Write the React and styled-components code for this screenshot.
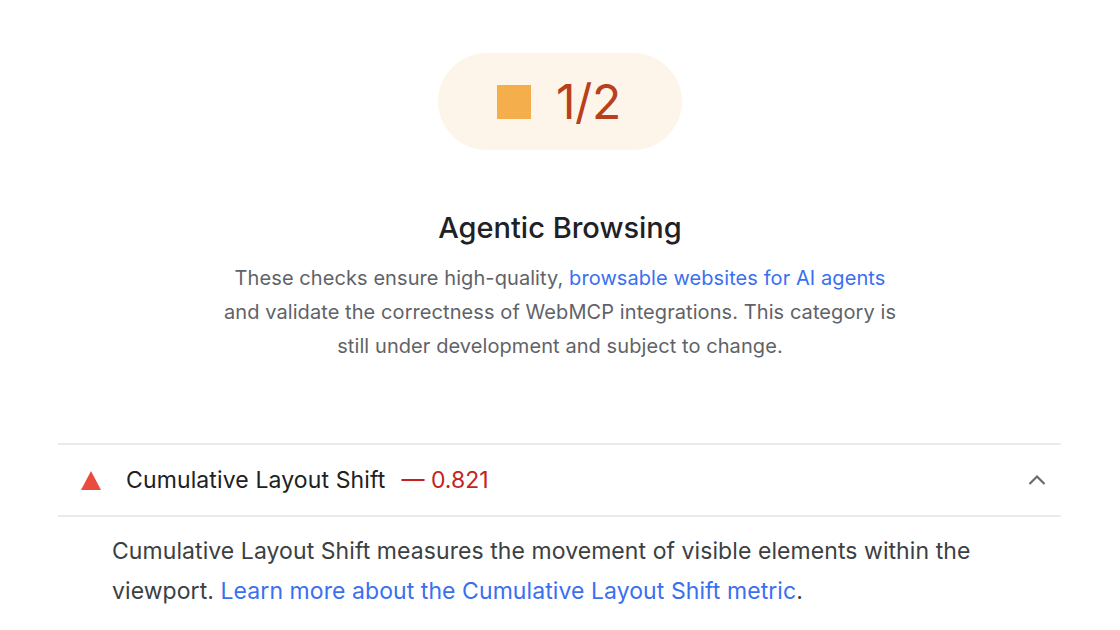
import React from "react";
import styled, { createGlobalStyle } from "styled-components";

const Global = createGlobalStyle`
  html, body { margin: 0; padding: 0; background: #fff; }
  body { font-family: Inter, "Noto Sans", Roboto, sans-serif; color: #202124; -webkit-font-smoothing: antialiased; }
`;

const Page = styled.div`
  width: 1120px;
  height: 630px;
  overflow: hidden;
  display: flex;
  flex-direction: column;
  align-items: center;
`;

const Header = styled.header`
  display: flex;
  flex-direction: column;
  align-items: center;
  padding-top: 53px;
`;

const ScorePill = styled.div`
  width: 244px;
  height: 97px;
  border-radius: 49px;
  background: #fdf5ea;
  display: flex;
  align-items: center;
  justify-content: center;
  gap: 25px;
  padding-right: 2px;
  box-sizing: border-box;
`;

const Square = styled.span`
  width: 34px;
  height: 34px;
  background: #f4af4c;
  display: block;
`;

const Score = styled.span`
  font-size: 48px;
  color: #b8401c;
  line-height: 1;
  font-weight: 400;
  letter-spacing: -0.3px;
`;

const Title = styled.h2`
  margin: 61px 0 0;
  font-size: 29px;
  font-weight: 500;
  color: #202124;
  line-height: 34px;
  letter-spacing: 0;
`;

const Description = styled.p`
  margin: 16px 0 0;
  width: 684px;
  text-align: center;
  font-size: 20px;
  line-height: 34px;
  color: #5f6368;
  letter-spacing: 0.08px;
`;

const Link = styled.a`
  color: #3a6ff0;
  text-decoration: none;
`;

const Audit = styled.section`
  align-self: stretch;
  margin: 80px 59px 0 58px;
  border-top: 2px solid #ebebeb;
`;

const AuditRow = styled.div`
  height: 70px;
  display: flex;
  align-items: center;
  padding: 0 14px 0 23px;
  border-bottom: 2px solid #ebebeb;
`;

const Triangle = styled.span`
  width: 0;
  height: 0;
  border-left: 10.5px solid transparent;
  border-right: 10.5px solid transparent;
  border-bottom: 19px solid #eb4a3f;
  margin-right: 25px;
`;

const AuditTitle = styled.span`
  font-size: 23px;
  color: #202124;
  letter-spacing: 0.12px;
`;

const AuditValue = styled.span`
  font-size: 23px;
  color: #c5221f;
  margin-left: 16px;
`;

const Chevron = styled.svg`
  margin-left: auto;
  width: 20px;
  height: 20px;
`;

const AuditBody = styled.p`
  margin: 14px 0 0 54px;
  font-size: 23px;
  line-height: 40px;
  color: #3c4043;
  max-width: 880px;
  letter-spacing: 0.07px;
`;

export default function App() {
  return (
    <>
      <Global />
      <Page>
        <Header>
          <ScorePill>
            <Square />
            <Score>1/2</Score>
          </ScorePill>
          <Title>Agentic Browsing</Title>
          <Description>
            These checks ensure high-quality,{" "}
            <Link href="#">browsable websites for AI agents</Link> and validate the
            correctness of WebMCP integrations. This category is still under
            development and subject to change.
          </Description>
        </Header>
        <Audit>
          <AuditRow>
            <Triangle />
            <AuditTitle>Cumulative Layout Shift</AuditTitle>
            <AuditValue>— 0.821</AuditValue>
            <Chevron viewBox="0 0 20 20" fill="none">
              <path d="M2.5 14 L10 6.5 L17.5 14" stroke="#6b6b6b" strokeWidth="2.2" />
            </Chevron>
          </AuditRow>
          <AuditBody>
            Cumulative Layout Shift measures the movement of visible elements within the
            viewport. <Link href="#">Learn more about the Cumulative Layout Shift metric</Link>.
          </AuditBody>
        </Audit>
      </Page>
    </>
  );
}
